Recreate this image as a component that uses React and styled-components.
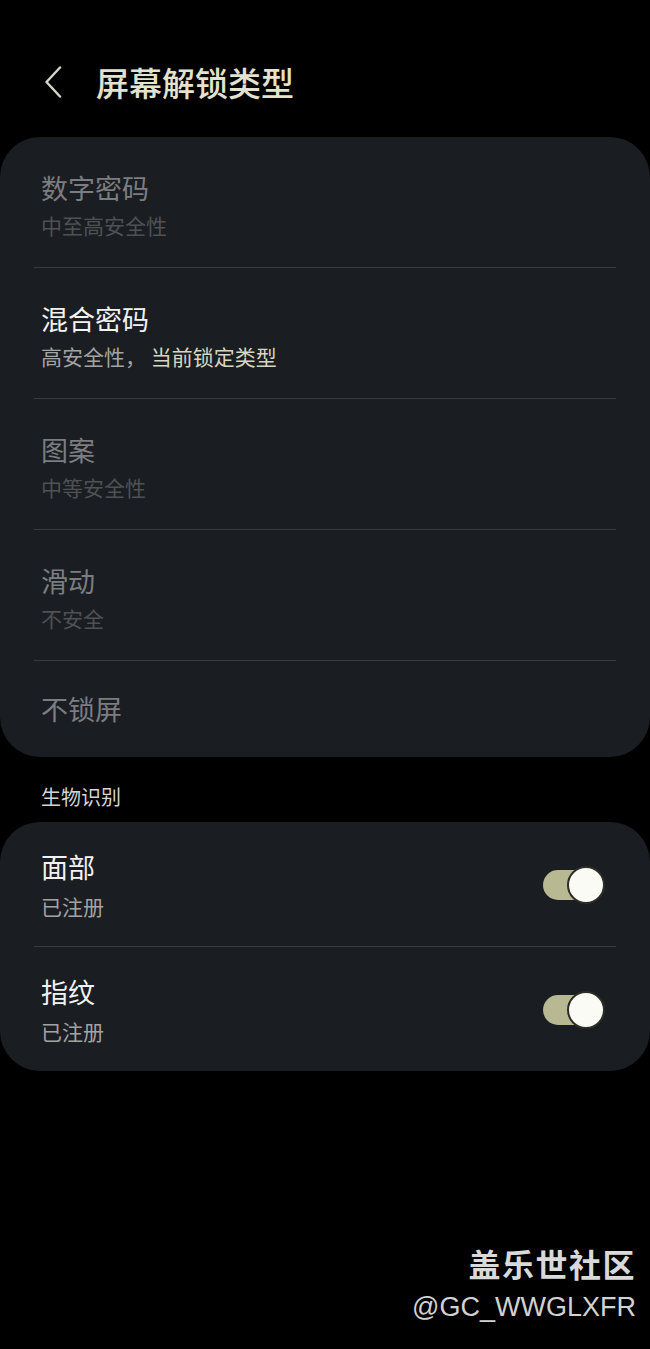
import React from "react";
import styled, { createGlobalStyle } from "styled-components";

const Global = createGlobalStyle`
  html, body { margin: 0; padding: 0; background: #000; }
  body { font-family: "Noto Sans CJK SC", "Noto Sans", sans-serif; }
  * { box-sizing: border-box; }
`;

const Page = styled.div`
  width: 650px;
  min-height: 1349px;
  background: #000;
  display: flex;
  flex-direction: column;
`;

const Header = styled.div`
  display: flex;
  align-items: center;
  height: 44px;
  margin: 60px 0 33px;
  padding-left: 42px;
`;

const Back = styled.button`
  width: 22px;
  height: 34px;
  padding: 0;
  border: none;
  background: none;
  display: flex;
  align-items: center;
  justify-content: center;
  margin-right: 32px;
`;

const Title = styled.h1`
  margin: 0;
  font-size: 33px;
  line-height: 44px;
  font-weight: 500;
  color: #e2e2cf;
`;

const Card = styled.div`
  background: #1a1d22;
  border-radius: 40px;
  display: flex;
  flex-direction: column;
`;

const Row = styled.div`
  display: flex;
  align-items: center;
  padding: ${(p) => p.$pad || "32px 45px 28px 41px"};
`;

const Texts = styled.div`
  flex: 1;
  display: flex;
  flex-direction: column;
  gap: ${(p) => p.$gap || "5px"};
`;

const ItemTitle = styled.div`
  font-size: 27px;
  line-height: 36px;
  color: ${(p) => (p.$dim ? "#7c7d80" : "#f2f2f2")};
`;

const ItemSub = styled.div`
  font-size: 21px;
  line-height: 28px;
  color: ${(p) => (p.$dim ? "#4f5155" : "#a3a3a3")};
`;

const Accent = styled.span`
  color: #d7d7bf;
`;

const Divider = styled.div`
  height: 1px;
  margin: 0 34px;
  background: #383b40;
`;

const SectionLabel = styled.div`
  font-size: 20px;
  line-height: 28px;
  color: #d4d4d4;
  padding-left: 41px;
  margin: 26px 0 11px;
`;

const Toggle = styled.div`
  position: relative;
  width: 62px;
  height: 38px;
  flex-shrink: 0;
`;

const Track = styled.div`
  position: absolute;
  left: 0;
  top: 4px;
  width: 56px;
  height: 30px;
  border-radius: 15px;
  background: #b8b893;
`;

const Thumb = styled.div`
  position: absolute;
  right: 0;
  top: 0;
  width: 38px;
  height: 38px;
  border-radius: 50%;
  background: #fbfbf6;
  border: 2px solid #2c2d24;
`;

const Footer = styled.div`
  margin-top: auto;
  padding: 0 14px 22px 0;
  display: flex;
  flex-direction: column;
  align-items: flex-end;
`;

const Brand = styled.div`
  font-size: 32px;
  line-height: 40px;
  font-weight: 700;
  color: #d9d9d9;
  letter-spacing: 1.5px;
`;

const Handle = styled.div`
  font-family: "Liberation Sans", "Noto Sans CJK SC", sans-serif;
  font-size: 27px;
  line-height: 40px;
  color: #d2d2d2;
  margin-top: 4px;
`;

const lockTypes = [
  { title: "数字密码", sub: "中至高安全性", dim: true },
  { title: "混合密码", sub: "current", dim: false },
  { title: "图案", sub: "中等安全性", dim: true },
  { title: "滑动", sub: "不安全", dim: true },
  { title: "不锁屏", dim: true },
];

const bio = [
  { title: "面部", sub: "已注册" },
  { title: "指纹", sub: "已注册" },
];

export default function App() {
  return (
    <Page>
      <Global />
      <Header>
        <Back aria-label="返回">
          <svg width="18" height="32" viewBox="0 0 18 32" fill="none">
            <path d="M16 1.5 L2.5 16 L16 30.5" stroke="#d6d6cc" strokeWidth="2.4" strokeLinecap="round" strokeLinejoin="round" />
          </svg>
        </Back>
        <Title>屏幕解锁类型</Title>
      </Header>

      <Card>
        {lockTypes.map((t, i) => (
          <React.Fragment key={t.title}>
            {i > 0 && <Divider />}
            <Row $pad={t.sub ? "33px 45px 28px 41px" : "30px 45px 30px 41px"}>
              <Texts>
                <ItemTitle $dim={t.dim}>{t.title}</ItemTitle>
                {t.sub === "current" ? (
                  <ItemSub>
                    高安全性， <Accent>当前锁定类型</Accent>
                  </ItemSub>
                ) : (
                  t.sub && <ItemSub $dim>{t.sub}</ItemSub>
                )}
              </Texts>
            </Row>
          </React.Fragment>
        ))}
      </Card>

      <SectionLabel>生物识别</SectionLabel>

      <Card>
        {bio.map((b, i) => (
          <React.Fragment key={b.title}>
            {i > 0 && <Divider />}
            <Row $pad="27px 45px 26px 41px">
              <Texts $gap="7px">
                <ItemTitle>{b.title}</ItemTitle>
                <ItemSub>{b.sub}</ItemSub>
              </Texts>
              <Toggle>
                <Track />
                <Thumb />
              </Toggle>
            </Row>
          </React.Fragment>
        ))}
      </Card>

      <Footer>
        <Brand>盖乐世社区</Brand>
        <Handle>@GC_WWGLXFR</Handle>
      </Footer>
    </Page>
  );
}
